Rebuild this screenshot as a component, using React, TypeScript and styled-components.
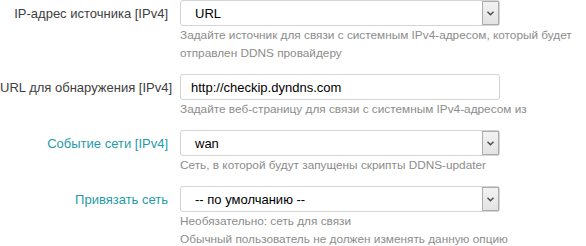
import React from "react";
import styled, { createGlobalStyle } from "styled-components";

const GlobalStyle = createGlobalStyle`
  html, body {
    margin: 0;
    padding: 0;
    background: #ffffff;
  }
  body {
    font-family: "Liberation Sans", Arial, sans-serif;
  }
`;

const Form = styled.div`
  display: flex;
  flex-direction: column;
  gap: 12px;
  width: 586px;
`;

const Row = styled.div`
  display: grid;
  grid-template-columns: 168px 320px;
  column-gap: 12px;
`;

const Label = styled.label<{ $link?: boolean }>`
  text-align: right;
  font-size: 13px;
  line-height: 18px;
  padding-top: 5px;
  color: ${({ $link }) => ($link ? "#1f9ba8" : "#404040")};
  white-space: nowrap;
`;

const Field = styled.div`
  display: flex;
  flex-direction: column;
`;

const Box = styled.div`
  position: relative;
  box-sizing: border-box;
  height: 26px;
  width: 320px;
  border: 1px solid #d4d4d4;
  border-radius: 3px;
  background: #fff;
  display: flex;
  align-items: center;
  font-size: 13px;
  color: #000;
`;

const Value = styled.span<{ $indent: number }>`
  padding-left: ${({ $indent }) => $indent}px;
  white-space: nowrap;
`;

const ArrowButton = styled.span`
  position: absolute;
  top: 0;
  right: 0;
  bottom: 0;
  width: 17px;
  box-sizing: border-box;
  border: 1px solid #acacac;
  background: linear-gradient(#f2f2f2, #e3e3e3);
  display: flex;
  align-items: center;
  justify-content: center;
`;

const Hint = styled.div`
  font-size: 11.8px;
  line-height: 18px;
  color: #8c8c8c;
  white-space: nowrap;
`;

const Chevron = () => (
  <svg width="7" height="5" viewBox="0 0 7 5">
    <path d="M0.5 0.8 L3.5 3.8 L6.5 0.8" fill="none" stroke="#4a4a4a" strokeWidth="1.4" />
  </svg>
);

const Select: React.FC<{ value: string }> = ({ value }) => (
  <Box>
    <Value $indent={14}>{value}</Value>
    <ArrowButton>
      <Chevron />
    </ArrowButton>
  </Box>
);

const TextInput: React.FC<{ value: string }> = ({ value }) => (
  <Box>
    <Value $indent={10}>{value}</Value>
  </Box>
);

export default function App() {
  return (
    <>
      <GlobalStyle />
      <Form>
        <Row>
          <Label>IP-адрес источника [IPv4]</Label>
          <Field>
            <Select value="URL" />
            <Hint>Задайте источник для связи с системным IPv4-адресом, который будет</Hint>
            <Hint>отправлен DDNS провайдеру</Hint>
          </Field>
        </Row>
        <Row>
          <Label>URL для обнаружения [IPv4]</Label>
          <Field>
            <TextInput value="http://checkip.dyndns.com" />
            <Hint>Задайте веб-страницу для связи с системным IPv4-адресом из</Hint>
          </Field>
        </Row>
        <Row>
          <Label $link>Событие сети [IPv4]</Label>
          <Field>
            <Select value="wan" />
            <Hint>Сеть, в которой будут запущены скрипты DDNS-updater</Hint>
          </Field>
        </Row>
        <Row>
          <Label $link>Привязать сеть</Label>
          <Field>
            <Select value="-- по умолчанию --" />
            <Hint>Необязательно: сеть для связи</Hint>
            <Hint>Обычный пользователь не должен изменять данную опцию</Hint>
          </Field>
        </Row>
      </Form>
    </>
  );
}
